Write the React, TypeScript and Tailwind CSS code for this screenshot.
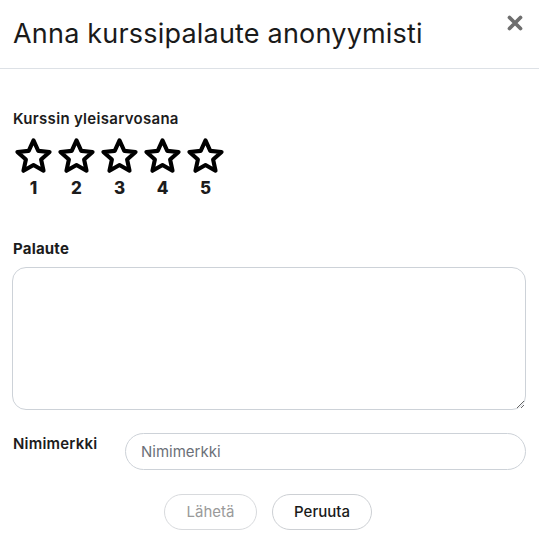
import React from 'react';

function StarIcon() {
  return (
    <svg viewBox="0 0 40 40" className="h-[39px] w-[39px]" fill="none">
      <polygon
        points="20,3.5 24.9,14.2 36.5,15.3 27.8,23.1 30.3,34.6 20,28.7 9.7,34.6 12.2,23.1 3.5,15.3 15.1,14.2"
        stroke="#000"
        strokeWidth="4.2"
        strokeLinejoin="round"
      />
    </svg>
  );
}

export default function App() {
  const ratings = [1, 2, 3, 4, 5];

  return (
    <div className="w-[539px] h-[542px] bg-white text-[#1c1c1c] font-['Inter',sans-serif]">
      {/* Header */}
      <div className="flex items-start justify-between h-[69px] border-b border-[#dde1e6] pl-[13px] pr-[13px]">
        <h2 className="mt-[17px] text-[27px] leading-[34px] font-normal tracking-[0.2px] text-[#1a1a1a]">
          Anna kurssipalaute anonyymisti
        </h2>
        <button className="mt-[12px] text-[#6e6e6e]">
          <svg viewBox="0 0 20 20" className="h-[22px] w-[22px]">
            <path d="M5 5 L15 15 M15 5 L5 15" stroke="currentColor" strokeWidth="3.4" strokeLinecap="round" />
          </svg>
        </button>
      </div>

      {/* Body */}
      <div className="px-[12px] pt-[40px]">
        <label className="block pl-[1px] text-[15px] leading-[20px] font-semibold tracking-[0.3px]">Kurssin yleisarvosana</label>
        <div className="mt-[8px] flex gap-[4px] pl-[2px]">
          {ratings.map((r) => (
            <button key={r} className="flex w-[39px] flex-col items-center">
              <StarIcon />
              <span className="mt-[2px] text-[17px] leading-[20px] font-extrabold">{r}</span>
            </button>
          ))}
        </div>

        <label className="mt-[41px] block pl-[1px] text-[15px] leading-[20px] font-bold tracking-[0.2px]">Palaute</label>
        <textarea className="mt-[8px] block h-[143px] w-[514px] rounded-[14px] border border-[#cdd2d8] px-3 py-2 outline-none" />

        <div className="mt-[23px] flex items-center">
          <label className="w-[113px] pl-[1px] -mt-[16px] text-[15px] leading-[20px] font-semibold tracking-[0.2px]">Nimimerkki</label>
          <input
            placeholder="Nimimerkki"
            className="h-[37px] w-[401px] rounded-full border border-[#cdd2d8] px-[15px] text-[15px] placeholder:text-[#6b7078] outline-none"
          />
        </div>

        <div className="mt-[24px] flex justify-center gap-[15px] pr-[3px]">
          <button disabled className="h-[36px] w-[93px] rounded-full border border-[#d8dadd] text-[15px] text-[#9a9a9a]">
            Lähetä
          </button>
          <button className="h-[36px] w-[100px] rounded-full border border-[#cdd0d4] text-[15px] font-medium text-[#1a1a1a]">
            Peruuta
          </button>
        </div>
      </div>
    </div>
  );
}
